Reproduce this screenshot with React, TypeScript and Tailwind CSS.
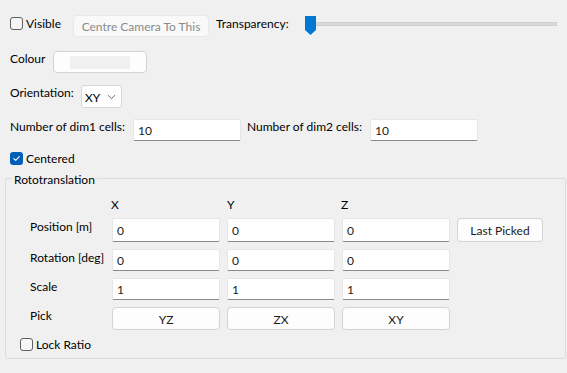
import React from 'react';

const font = { fontFamily: 'Lato, "Noto Sans", sans-serif' };

function CheckBox({ checked }: { checked?: boolean }) {
  if (checked) {
    return (
      <span className="w-[13px] h-[13px] rounded-[3px] bg-[#005fb8] flex items-center justify-center shrink-0">
        <svg width="9" height="9" viewBox="0 0 9 9" fill="none">
          <path d="M1.8 4.6 L3.7 6.4 L7.3 2.6" stroke="white" strokeWidth="1.1" strokeLinecap="round" strokeLinejoin="round" />
        </svg>
      </span>
    );
  }
  return <span className="w-[13px] h-[13px] rounded-[3px] border border-[#5f5f5f] bg-[#f6f6f6] shrink-0" />;
}

function TextBox({ value, width = 'w-[108px]', height = 'h-[22px]' }: { value: string; width?: string; height?: string }) {
  return (
    <div
      className={`${width} ${height} bg-white border border-[#e6e6e6] border-b-[#8a8a8a] rounded-[2px] flex items-center pl-[4px] text-[#1b1b1b]`}
    >
      <span className="translate-y-[1px]">{value}</span>
    </div>
  );
}

function PushButton({ children, className = '' }: { children: React.ReactNode; className?: string }) {
  return (
    <button
      type="button"
      className={`bg-[#fdfdfd] border border-[#d3d3d3] rounded-[4px] flex items-center justify-center whitespace-nowrap text-[#1b1b1b] ${className}`}
    >
      {children}
    </button>
  );
}

export default function App() {
  const rows = [
    { label: 'Position [m]', values: ['0', '0', '0'] },
    { label: 'Rotation [deg]', values: ['0', '0', '0'] },
    { label: 'Scale', values: ['1', '1', '1'] },
  ];

  return (
    <div className="w-[567px] h-[373px] bg-[#f0f0f0] text-[12px] leading-[16px] text-black overflow-hidden whitespace-nowrap" style={font}>
      {/* visible / centre camera / transparency */}
      <div className="flex items-start pt-[14px] pl-[10px]">
        <label className="flex items-center h-[16px] w-[63px] mt-[1px]">
          <CheckBox />
          <span className="ml-[3px] translate-y-[1px]">Visible</span>
        </label>
        <button
          type="button"
          className="mt-[1px] w-[136px] h-[22px] bg-[#f9f9f9] border border-[#e8e8e8] rounded-[4px] text-[#8a8a8a]"
        >
          <span className="relative top-[1px]">Centre Camera To This</span>
        </button>
        <span className="ml-[7px] w-[89px] h-[16px] mt-[2px]">Transparency:</span>
        <div className="relative mt-[2px] w-[252px] h-[19px]">
          <div className="absolute left-[8px] right-0 top-[6px] h-[4px] bg-[#dadada] border border-[#cfcfcf]" />
          <svg className="absolute left-0 top-0" width="11" height="19" viewBox="0 0 11 19">
            <path d="M0 0 H11 V14 L5.5 19 L0 14 Z" fill="#0078d4" />
          </svg>
        </div>
      </div>

      {/* colour */}
      <div className="flex items-start mt-[12px] pl-[10px]">
        <span className="w-[43px] h-[16px] mt-[2px]">Colour</span>
        <PushButton className="mt-[2px] w-[94px] h-[22px]">
          <span className="w-[60px] h-[13px] bg-[#f0f0f0]" />
        </PushButton>
      </div>

      {/* orientation */}
      <div className="flex items-start mt-[10px] pl-[10px]">
        <span className="w-[71px] h-[16px] mt-[2px]">Orientation:</span>
        <div className="w-[41px] h-[23px] mt-[2px] bg-white border border-[#d5d5d5] rounded-[3px] flex items-center pl-[3px] pr-[5px] justify-between">
          <span className="translate-y-[1px]">XY</span>
          <svg width="9" height="6" viewBox="0 0 9 6" fill="none">
            <path d="M0.8 1 L4.5 4.6 L8.2 1" stroke="#5a5a5a" strokeWidth="0.9" />
          </svg>
        </div>
      </div>

      {/* cell counts */}
      <div className="flex items-start mt-[9px] pl-[10px]">
        <span className="w-[123px] h-[16px] mt-[2px]">Number of dim1 cells:</span>
        <div className="mt-[2px]">
          <TextBox value="10" />
        </div>
        <span className="ml-[6px] w-[123px] h-[16px] mt-[2px]">Number of dim2 cells:</span>
        <div className="mt-[2px]">
          <TextBox value="10" />
        </div>
      </div>

      {/* centered */}
      <label className="flex items-center h-[16px] mt-[9px] pl-[10px]">
        <CheckBox checked />
        <span className="ml-[3px] translate-y-[1px]">Centered</span>
      </label>

      {/* rototranslation group */}
      <div className="relative mt-[12px] ml-[5px] w-[561px] h-[181px] border border-[#dcdcdc] rounded-[2px] pt-[18px]">
        <span className="absolute left-[6px] top-[-7px] px-[2px] bg-[#f0f0f0]">Rototranslation</span>

        <div className="grid grid-cols-[75px_108px_108px_108px_86px] gap-x-[7px] gap-y-[7px] pl-[24px]">
          <span />
          <span className="h-[14px] -ml-px">X</span>
          <span className="h-[14px]">Y</span>
          <span className="h-[14px] -ml-px">Z</span>
          <span />

          {rows.map((row, i) => (
            <React.Fragment key={row.label}>
              <span className="self-start mt-px">{row.label}</span>
              {row.values.map((v, j) => (
                <TextBox key={j} value={v} height={i === 0 ? 'h-[24px]' : 'h-[22px]'} />
              ))}
              {i === 0 ? (
                <PushButton className="h-[24px] w-[86px]">
                  <span className="translate-y-[1px]">Last Picked</span>
                </PushButton>
              ) : (
                <span />
              )}
            </React.Fragment>
          ))}

          <span className="self-start mt-px">Pick</span>
          <PushButton className="h-[23px]">
            <span className="translate-y-[1px]">YZ</span>
          </PushButton>
          <PushButton className="h-[23px]">
            <span className="translate-y-[1px]">ZX</span>
          </PushButton>
          <PushButton className="h-[23px]">
            <span className="translate-y-[1px]">XY</span>
          </PushButton>
          <span />
        </div>

        <label className="flex items-center h-[16px] mt-[6px] pl-[14px]">
          <CheckBox />
          <span className="ml-[3px] translate-y-[1px]">Lock Ratio</span>
        </label>
      </div>
    </div>
  );
}
